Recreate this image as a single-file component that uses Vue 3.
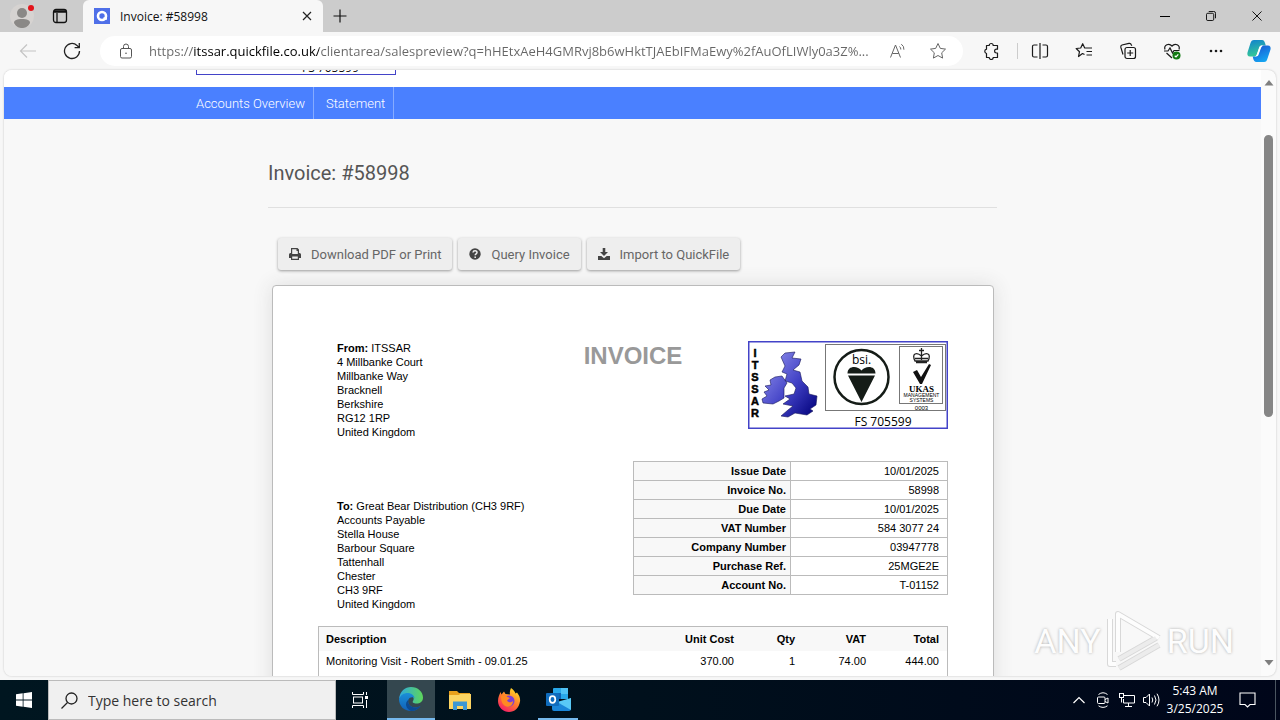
<template>
  <div class="desktop">
    <!-- Tab strip -->
    <header class="tab-strip">
      <button class="profile" aria-label="Profile">
        <svg width="28" height="28" viewBox="0 0 28 28">
          <circle cx="13" cy="14" r="12" fill="#d6d3d1" />
          <circle cx="13" cy="11" r="5" fill="#8a8886" />
          <path d="M5 21c0-3 3-4 8-4s8 1 8 4c-2 4-5 5-8 5s-6-1-8-5z" fill="#8a8886" />
          <circle cx="22" cy="6" r="3" fill="#e3141b" />
        </svg>
      </button>
      <button class="workspaces" aria-label="Tab actions">
        <svg width="16" height="16" viewBox="0 0 16 16" fill="none" stroke="#111" stroke-width="1.3">
          <rect x="1.5" y="1.5" width="13" height="13" rx="2.5" />
          <path d="M2 3h12M2 4.2h12M5 5v9.500" />
        </svg>
      </button>
      <div class="tab">
        <svg width="16" height="16" viewBox="0 0 16 16">
          <rect width="16" height="16" fill="#4f6fe8" />
          <circle cx="8" cy="8" r="4" fill="none" stroke="#fff" stroke-width="2.600" />
          <path d="M9.500 10.500h3.500" stroke="#fff" stroke-width="2.500" />
        </svg>
        <span class="tab-title">Invoice: #58998</span>
        <button class="tab-close" aria-label="Close tab">
          <svg width="10" height="10" viewBox="0 0 10 10" stroke="#222" stroke-width="1.200">
            <path d="M1 1l8 8M9 1L1 9" />
          </svg>
        </button>
      </div>
      <button class="new-tab" aria-label="New tab">
        <svg width="14" height="14" viewBox="0 0 14 14" stroke="#111" stroke-width="1.200">
          <path d="M7 .5v13M.5 7h13" />
        </svg>
      </button>
      <div class="window-buttons">
        <button aria-label="Minimize">
          <svg width="10" height="10" viewBox="0 0 10 10"><path d="M0 5.500h10" stroke="#000" /></svg>
        </button>
        <button aria-label="Restore">
          <svg width="10" height="10" viewBox="0 0 11 11" fill="none" stroke="#000">
            <rect x=".5" y="2.500" width="8" height="8" rx="1.500" />
            <path d="M3 .5h5.500a2 2 0 0 1 2 2V8" />
          </svg>
        </button>
        <button aria-label="Close">
          <svg width="10" height="10" viewBox="0 0 11 11" stroke="#000"><path d="M.5.5l10 10M10.500.5l-10 10" /></svg>
        </button>
      </div>
    </header>

    <!-- Address bar -->
    <div class="toolbar">
      <button class="tool" aria-label="Back">
        <svg width="18" height="16" viewBox="0 0 18 16" fill="none" stroke="#c4c4c4" stroke-width="1.200">
          <path d="M17 8H2M8 1.500L1.500 8 8 14.500" />
        </svg>
      </button>
      <button class="tool" aria-label="Refresh">
        <svg width="18" height="18" viewBox="0 0 18 18" fill="none" stroke="#222" stroke-width="1.300">
          <path d="M16.500 9A7.500 7.500 0 1 1 14 3.400L16 5.500M16.300 1v4.700h-4.700" />
        </svg>
      </button>
      <div class="omnibox">
        <svg width="14" height="16" viewBox="0 0 14 16" fill="none" stroke="#555">
          <rect x="1.500" y="5.500" width="11" height="9.500" rx="1.500" />
          <path d="M4.500 5.500V3.500a2.500 2.500 0 0 1 5 0v2" />
          <circle cx="7" cy="10.200" r=".8" fill="#555" stroke="none" />
        </svg>
        <input v-model="address" class="address" type="text" aria-label="Address" />
        <button class="omni-button" aria-label="Read aloud">
          <svg width="18" height="16" viewBox="0 0 18 16" fill="none" stroke="#666">
            <path d="M1.500 14.500L6.500 2l5 12.500M3.300 10.500h6.500M10.500 3.500q1.500 1.200 1.300 3M12.300 1.200q3 2 2.600 5.500" />
          </svg>
        </button>
        <button class="omni-button" aria-label="Add to favorites">
          <svg width="18" height="18" viewBox="0 0 18 18" fill="none" stroke="#666" stroke-linejoin="round">
            <path :d="starPath" />
          </svg>
        </button>
      </div>
      <button class="tool" aria-label="Extensions">
        <svg width="18" height="18" viewBox="0 0 18 18" fill="none" stroke="#1a1a1a" stroke-width="1.200" stroke-linejoin="round">
          <path d="M4.500 3.500h2.700a2 2 0 0 1 4 0H15.500V7.200h-1a1.900 1.900 0 0 0 0 3.800h1v4.500h-4.300a2 2 0 0 1-4 0H4.500v-4a2.200 2.200 0 0 1 0-4.300z" />
        </svg>
      </button>
      <span class="separator"></span>
      <button class="tool" aria-label="Split screen">
        <svg width="18" height="18" viewBox="0 0 18 18" fill="none" stroke="#1a1a1a" stroke-width="1.200">
          <path d="M6.500 3H3a1.500 1.500 0 0 0-1.500 1.500v9A1.500 1.500 0 0 0 3 15h3.500M11.500 3H15a1.500 1.500 0 0 1 1.500 1.500v9A1.500 1.500 0 0 1 15 15h-3.500M9 1v16" />
        </svg>
      </button>
      <button class="tool" aria-label="Favorites">
        <svg width="18" height="18" viewBox="0 0 18 18" fill="none" stroke="#1a1a1a" stroke-width="1.200" stroke-linejoin="round">
          <path d="M9.500 12.500L7.500 11.500 3.500 14.500 4.500 9.700 1.200 6.500 5.700 6 7.700 1.700 9.700 6H17M11.500 9.500H17M11.500 13H17" />
        </svg>
      </button>
      <button class="tool" aria-label="Collections">
        <svg width="18" height="18" viewBox="0 0 18 18" fill="none" stroke="#1a1a1a" stroke-width="1.200">
          <rect x="6" y="5.500" width="10.500" height="11" rx="2" />
          <path d="M11.200 8v6M8.200 11h6M4 12.500L1.800 5.200A2 2 0 0 1 3 3l7-1.600a2 2 0 0 1 2.300 1.300l.5 1" />
        </svg>
      </button>
      <button class="tool" aria-label="Browser essentials">
        <svg width="18" height="18" viewBox="0 0 18 18" fill="none" stroke="#1a1a1a" stroke-width="1.200">
          <path d="M2 7.500C.5 3 6 .5 9 4c3-3.500 8.500-1 7 3.500M1 9h4l2-3 2.500 5L11 8.500h5.500M3.500 11L9 16" />
          <circle cx="13.500" cy="13.500" r="4" fill="#137a13" stroke="none" />
          <path d="M11.700 13.700l1.300 1.200 2.300-2.600" stroke="#fff" />
        </svg>
      </button>
      <button class="tool" aria-label="Settings and more">
        <svg width="16" height="4" viewBox="0 0 16 4" fill="#1a1a1a">
          <circle cx="3" cy="2" r="1.300" /><circle cx="8" cy="2" r="1.300" /><circle cx="13" cy="2" r="1.300" />
        </svg>
      </button>
      <button class="tool copilot" aria-label="Copilot">
        <svg width="24" height="24" viewBox="0 0 24 24">
          <defs>
            <linearGradient id="copilotLeft" x1="0" y1="0" x2="0.300" y2="1">
              <stop offset="0" stop-color="#0f7fd0" /><stop offset="1" stop-color="#35c997" />
            </linearGradient>
            <linearGradient id="copilotRight" x1="0" y1="0" x2="0.500" y2="1">
              <stop offset="0" stop-color="#1b4fd0" /><stop offset="1" stop-color="#15a3f0" />
            </linearGradient>
          </defs>
          <path d="M7 1h8c2 0 2.500 1.500 3 3l.8 2.500H15c-2 0-2.700 1-3.200 3l-2 6C9.200 17 8.500 17.500 7 17.500H3C.5 17.500 0 15.500.5 13.500l3-9.500C4.200 2 5 1 7 1z" fill="url(#copilotLeft)" />
          <path d="M17 23H9.500c-2 0-2.700-1.500-3.200-3l-.6-2.500H8c2 0 3-1 3.500-3l2-5.500c.6-2 1.500-2.500 3-2.500h4.300c2.500 0 3.200 2 2.700 4l-3 9C19.800 22 19 23 17 23z" fill="url(#copilotRight)" />
          <path d="M14 6.500h2.500c-1.500.5-2.200 1.500-2.700 3l-2 5.500c-.6 1.800-1.400 2.500-3 2.500H7.500c1.500-.3 2-1 2.500-2.500l2-5.500c.4-1.500 1-2.500 2-3z" fill="#fff" />
        </svg>
      </button>
    </div>

    <!-- Page -->
    <div class="viewport">
      <main class="page">
        <div class="site-header">
          <div class="container">
            <div class="header-logo"><span>FS 705599</span></div>
          </div>
        </div>
        <nav class="site-nav">
          <div class="container nav-links">
            <a href="#">Accounts Overview</a>
            <a href="#">Statement</a>
          </div>
        </nav>

        <section class="content">
          <h1>Invoice: #58998</h1>
          <div class="actions">
            <button class="action">
              <svg width="12" height="12" viewBox="0 0 12 12" fill="#444">
                <path fill-rule="evenodd" d="M2 0h6.500L10 1.500V5h.5A1.500 1.500 0 0 1 12 6.500V10h-2v2H2v-2H0V6.500A1.500 1.500 0 0 1 1.500 5H2zM3.200 1.200V6h5.600V3H7.500V1.200zM3.200 8.500v2.300h5.600V8.500z" />
              </svg>
              Download PDF or Print
            </button>
            <button class="action">
              <svg width="12" height="12" viewBox="0 0 12 12">
                <circle cx="6" cy="6" r="5.700" fill="#444" />
                <path d="M4 4.500c.2-2.300 4-2.200 4 0C8 6 6.200 5.800 6.200 7.300M6.200 8.500v1.500" fill="none" stroke="#eee" stroke-width="1.500" />
              </svg>
              Query Invoice
            </button>
            <button class="action">
              <svg width="12" height="12" viewBox="0 0 12 12" fill="#444">
                <path d="M4.700 0h2.600v4H10L6 8 2 4h2.700zM0 8h3.300L6 10.300 8.700 8H12v4H0z" />
              </svg>
              Import to QuickFile
            </button>
          </div>

          <article class="sheet">
            <div class="sheet-top">
              <address class="from">
                <b>From:</b> ITSSAR<br />
                <template v-for="line in fromLines" :key="line">{{ line }}<br /></template>
              </address>
              <h2>INVOICE</h2>
              <svg class="logo" width="200" height="88" viewBox="0 0 200 88" role="img" aria-label="ITSSAR">
                <defs>
                  <linearGradient id="ukFill" gradientUnits="userSpaceOnUse" x1="20" y1="30" x2="66" y2="66">
                    <stop offset="0" stop-color="#7c7ce2" /><stop offset="0.500" stop-color="#4242c6" /><stop offset="1" stop-color="#0c0c88" />
                  </linearGradient>
                </defs>
                <rect x=".75" y=".75" width="198.500" height="86.500" fill="#fff" stroke="#4343c8" stroke-width="1.500" />
                <g class="logo-letters">
                  <text v-for="(letter, i) in 'ITSSAR'" :key="i" x="7" :y="16 + i * 12">{{ letter }}</text>
                </g>
                <g fill="url(#ukFill)" stroke="#16165a" stroke-width=".6" stroke-linejoin="round">
                  <path d="M33 16L37 12 47 11 44 17 53 18 51 24 45 29 52 31 54 40 60 46 61 53 69 55 68 64 62 68 65 70 59 74 47 72 40 76 33 75 40 69 45 65 35 63 42 58 37 55 46 53 48 47 44 42 37 40 39 33 34 31 37 25z" />
                  <path d="M17 45L23 44 22 39 27 36 34 35 39 42 36 47 36 57 31 60 25 63 15 62 14 58 19 55 16 51 21 49z" />
                </g>
                <rect x="77.500" y="3.500" width="120" height="66" fill="none" stroke="#777" />
                <circle cx="113.500" cy="36" r="27" fill="#fff" stroke="#151c17" stroke-width="2.500" />
                <text class="logo-bsi" x="113.500" y="23">bsi.</text>
                <path d="M99.500 32.500c0-8 10-8 14-3 4-5 14-5 14 3zM100 34.500h27L113.500 61z" fill="#151c17" />
                <rect x="151.500" y="5.500" width="43" height="57" fill="none" stroke="#777" />
                <path d="M167 20c-4-8 2-9 6.500-5 4.500-4 10.500-3 6.500 5zM173.500 7v12M171 9.500h5M167 17.500h13M168 21.500h11" fill="none" stroke="#222" stroke-width="1.300" />
                <path d="M165 31l4-2 4 7 8-13 2 1-9 19h-2z" fill="#111" />
                <text class="logo-ukas" x="173.500" y="51">UKAS</text>
                <text class="logo-small" x="173.500" y="56">MANAGEMENT</text>
                <text class="logo-small" x="173.500" y="61">SYSTEMS</text>
                <text class="logo-code" x="173.500" y="69">0003</text>
                <text class="logo-fs" x="135" y="85">FS 705599</text>
              </svg>

              <address class="to">
                <b>To:</b> Great Bear Distribution (CH3 9RF)<br />
                <template v-for="line in toLines" :key="line">{{ line }}<br /></template>
              </address>
              <table class="summary">
                <tbody>
                  <tr v-for="row in summary" :key="row.label">
                    <th scope="row">{{ row.label }}</th>
                    <td>{{ row.value }}</td>
                  </tr>
                </tbody>
              </table>
            </div>

            <table class="items">
              <thead>
                <tr>
                  <th class="item-description">Description</th>
                  <th class="item-cost">Unit Cost</th>
                  <th class="item-qty">Qty</th>
                  <th class="item-vat">VAT</th>
                  <th class="item-total">Total</th>
                </tr>
              </thead>
              <tbody>
                <tr v-for="item in items" :key="item.description">
                  <td class="item-description">{{ item.description }}</td>
                  <td>{{ formatPrice(item.cost) }}</td>
                  <td>{{ item.qty }}</td>
                  <td>{{ formatPrice(item.vat) }}</td>
                  <td>{{ formatPrice(item.cost * item.qty + item.vat) }}</td>
                </tr>
              </tbody>
            </table>
          </article>
        </section>
      </main>
      <div class="scrollbar">
        <svg width="10" height="6" viewBox="0 0 10 6" fill="#7f7f7f"><path d="M5 0l4.500 5.500H.5z" /></svg>
        <div class="track"><div class="thumb"></div></div>
        <svg width="10" height="6" viewBox="0 0 10 6" fill="#7f7f7f"><path d="M5 5.500L9.500 0H.5z" /></svg>
      </div>
    </div>

    <!-- Watermark -->
    <div class="watermark">
      <span>ANY</span>
      <svg width="58" height="62" viewBox="0 0 58 62" fill="none" stroke-linejoin="round">
        <g stroke="#d8d8d8" stroke-width="6">
          <path d="M13 42V4l41 24M5 9v45h6M14 58l40-23M14 49l37-21" />
        </g>
        <g stroke="#fdfdfd" stroke-width="4">
          <path d="M13 42V4l41 24M5 9v45h6" />
        </g>
        <g stroke="#ececec" stroke-width="4">
          <path d="M14 58l40-23M14 49l37-21" />
        </g>
      </svg>
      <span>RUN</span>
    </div>

    <!-- Taskbar -->
    <footer class="taskbar">
      <button class="start" aria-label="Start">
        <svg width="16" height="16" viewBox="0 0 16 16" fill="#fff">
          <path d="M0 2.200l6.700-.9v6.300H0zM7.500 1.200L16 0v7.600H7.500zM0 8.400h6.700v6.300L0 13.800zM7.500 8.400H16V16l-8.500-1.200z" />
        </svg>
      </button>
      <label class="search">
        <svg width="17" height="17" viewBox="0 0 17 17" fill="none" stroke="#222" stroke-width="1.300">
          <circle cx="10.500" cy="6.500" r="5.500" /><path d="M6.500 10.500L.5 16.500" />
        </svg>
        <input type="text" placeholder="Type here to search" aria-label="Search" />
      </label>
      <button class="task task-view" aria-label="Task View">
        <svg width="17" height="16" viewBox="0 0 17 16" fill="none" stroke="#fff">
          <path d="M.5 0v2.500h11V0M.5 16v-2.500h11V16M14.500 0v3M14.500 8v8" />
          <rect x="1.500" y="5" width="9" height="6" /><rect x="13.500" y="4.500" width="2" height="2" fill="#fff" />
        </svg>
      </button>
      <button class="task active" aria-label="Microsoft Edge">
        <svg width="24" height="24" viewBox="0 0 24 24">
          <defs>
            <linearGradient id="edgeTop"><stop offset="0" stop-color="#2da8e0" /><stop offset="1" stop-color="#5ed65a" /></linearGradient>
            <linearGradient id="edgeLow" x1="0" y1="0" x2="0" y2="1"><stop offset="0" stop-color="#1a8fd8" /><stop offset="1" stop-color="#1160b7" /></linearGradient>
          </defs>
          <path d="M0 12C1 4 6 0 12 0c7 0 12 5 12 10.500 0 4-3 6-6.500 6-3 0-4.500-1-3.500-2.500 2-3-.5-6-4.500-6C5 8 1 10 0 12z" fill="url(#edgeTop)" />
          <path d="M0 12c1.500-4 5-6 8.500-6 4 0 7 2.500 7 5.500-1-2-5-1.500-6 1-1.500 4 2 8 6.500 8 2.500 0 4-.7 5.500-1.500C19.500 22 16 24 12 24 5 24 0 19 0 12z" fill="url(#edgeLow)" />
          <path d="M9.500 12.500c-1.500 4 2 8 6.500 8 2.500 0 4-.7 5.500-1.500C19.500 22 16 24 12 24c-5-2-7-8-2.500-11.500z" fill="#0d4a91" />
        </svg>
      </button>
      <button class="task" aria-label="File Explorer">
        <svg width="22" height="19" viewBox="0 0 22 19">
          <path d="M0 0h8l2 2h11v4H0z" fill="#e9a01c" />
          <path d="M0 4h10l1-1h11v15H0z" fill="#fcd462" />
          <path d="M4 19v-8.500h14V19h-4v-4H8v4z" fill="#3b97d5" />
        </svg>
      </button>
      <button class="task" aria-label="Firefox">
        <svg width="24" height="24" viewBox="0 0 24 24">
          <defs>
            <linearGradient id="foxFill" x1="0.800" y1="0" x2="0.200" y2="1">
              <stop offset="0" stop-color="#ffe226" /><stop offset="0.500" stop-color="#ff7a2e" /><stop offset="1" stop-color="#f5156c" />
            </linearGradient>
          </defs>
          <path d="M14 0c3 2 4 4 4.500 5.500L20 4.500c2.500 3 3.500 6 3 9C22 20 17.500 24 12 24S1 19.500 1 13C1 9 2.500 6.500 3.500 4l1 2.500L7 3.500 8.500 6l4.500.5C12.500 4 13 2 14 0z" fill="url(#foxFill)" />
          <circle cx="12" cy="13" r="5.500" fill="#7b3fd6" />
          <path d="M4 8c3-1.500 5-.5 6.500 1L13 10l-3 2.500c1 2 4 2.500 6 .5 0 4-3 6.500-6.500 5.500C6 17.500 4 14 4 8z" fill="#ff8a22" />
        </svg>
      </button>
      <button class="task running" aria-label="Outlook">
        <svg width="25" height="23" viewBox="0 0 25 23">
          <path d="M7 1q0-1 1-1h13q1 0 1 1v10H7z" fill="#28a8ea" /><path d="M7 5h8v6H7z" fill="#0f64b5" /><path d="M15 0h7v6h-7z" fill="#50c2f5" />
          <path d="M6 11l9.500 5L25 10v11q0 2-2 2H8q-2 0-2-2z" fill="#1a86d9" /><path d="M25 10v12L11 14z" fill="#59c9f6" />
          <rect y="5" width="13" height="13" rx="1" fill="#0f6cbd" />
          <ellipse cx="6.500" cy="11.500" rx="2.800" ry="3.300" fill="none" stroke="#fff" stroke-width="1.700" />
        </svg>
      </button>
      <div class="tray">
        <button aria-label="Show hidden icons">
          <svg width="12" height="8" viewBox="0 0 12 8" fill="none" stroke="#fff" stroke-width="1.200"><path d="M.5 7L6 1.500 11.500 7" /></svg>
        </button>
        <button aria-label="Meet Now">
          <svg width="14" height="16" viewBox="0 0 14 16" fill="none" stroke="#fff">
            <rect x="1.500" y="5" width="7.500" height="6.500" rx="1" />
            <path d="M9 7.500l3-1.500v5L9 9.500M2.500 2.500Q7-1 11.500 2.500M2.500 13.800Q7 17 11.500 13.800" />
          </svg>
        </button>
        <button aria-label="Network">
          <svg width="16" height="14" viewBox="0 0 16 14" fill="none" stroke="#fff">
            <path d="M5 2.500h10.500v7.500H4.500V6M9.500 10v3M6 13.500h7M2.500 5v4.500" /><rect x=".5" y=".5" width="4" height="4" />
          </svg>
        </button>
        <button aria-label="Volume">
          <svg width="17" height="14" viewBox="0 0 17 14" fill="none" stroke="#fff">
            <path d="M.5 4.500h2.500L6.500 1v12L3 9.500H.5zM9 4.500q1.500 2.500 0 5M11.500 2.500q3 4.500 0 9M14 .7q4 6.300 0 12.600" />
          </svg>
        </button>
        <div class="clock">
          <div>5:43 AM</div>
          <div>3/25/2025</div>
        </div>
        <button class="notifications" aria-label="Notifications">
          <svg width="17" height="16" viewBox="0 0 17 16" fill="none" stroke="#fff" stroke-width="1.100"><path d="M1 1h15v11.500h-5L8.500 15 6 12.500H1z" /></svg>
        </button>
        <span class="peek"></span>
      </div>
    </footer>
  </div>
</template>

<script setup>
import { ref } from 'vue'

const address = ref(
  'https://itssar.quickfile.co.uk/clientarea/salespreview?q=hHEtxAeH4GMRvj8b6wHktTJAEbIFMaEwy%2fAuOfLIWly0a3Z%...',
)

const starPath = 'M9 1.500l2.300 4.900 5.200.7-3.800 3.700.9 5.300L9 13.500l-4.600 2.600.9-5.300L1.500 7.100l5.200-.7z'

const fromLines = ['4 Millbanke Court', 'Millbanke Way', 'Bracknell', 'Berkshire', 'RG12 1RP', 'United Kingdom']

const toLines = [
  'Accounts Payable',
  'Stella House',
  'Barbour Square',
  'Tattenhall',
  'Chester',
  'CH3 9RF',
  'United Kingdom',
]

const summary = [
  { label: 'Issue Date', value: '10/01/2025' },
  { label: 'Invoice No.', value: '58998' },
  { label: 'Due Date', value: '10/01/2025' },
  { label: 'VAT Number', value: '584 3077 24' },
  { label: 'Company Number', value: '03947778' },
  { label: 'Purchase Ref.', value: '25MGE2E' },
  { label: 'Account No.', value: 'T-01152' },
]

const items = [{ description: 'Monitoring Visit - Robert Smith - 09.01.25', cost: 370, qty: 1, vat: 74 }]

// Function to format price with two decimals
const formatPrice = (price) => price.toFixed(2)
</script>

<style>
body {
  margin: 0;
}
</style>

<style scoped>
.desktop {
  display: flex;
  flex-direction: column;
  position: relative;
  height: 100vh;
  overflow: hidden;
  background: #f7f7f7;
  font-family: 'Open Sans', 'Noto Sans', sans-serif;
  font-size: 12px;
  color: #111;
}

button {
  display: flex;
  align-items: center;
  justify-content: center;
  padding: 0;
  border: 0;
  background: none;
  font: inherit;
  color: inherit;
}

svg {
  flex: none;
}

/* Tab strip */
.tab-strip {
  display: flex;
  flex: none;
  height: 32px;
  background: #ccc;
}

.profile {
  width: 46px;
}

.workspaces {
  width: 28px;
}

.tab {
  display: flex;
  align-items: center;
  gap: 10px;
  box-sizing: border-box;
  width: 240px;
  margin-left: 9px;
  padding: 0 8px 0 11px;
  border-radius: 6px 6px 0 0;
  background: #f7f7f7;
}

.tab-title {
  flex: 1;
}

.tab-close {
  width: 16px;
  height: 16px;
}

.new-tab {
  width: 34px;
}

.window-buttons {
  display: flex;
  margin-left: auto;
}

.window-buttons button {
  width: 46px;
}

/* Address bar */
.toolbar {
  display: flex;
  flex: none;
  align-items: center;
  height: 38px;
  padding-left: 6px;
}

.tool {
  width: 44px;
  height: 30px;
}

.copilot {
  width: 42px;
}

.omnibox {
  display: flex;
  flex: 1;
  align-items: center;
  min-width: 0;
  height: 30px;
  margin: 0 6px;
  padding-left: 19px;
  border-radius: 15px;
  background: #fff;
}

/* The host name is darker than the rest of the address */
.address {
  flex: 1;
  min-width: 0;
  margin-left: 16px;
  padding: 0;
  border: 0;
  outline: 0;
  background: linear-gradient(90deg, #666 44px, #000 44px, #000 170px, #666 170px);
  background-clip: text;
  -webkit-text-fill-color: transparent;
  font: 13px 'Open Sans', 'Noto Sans', sans-serif;
}

.omni-button {
  width: 40px;
}

.omni-button:last-child {
  margin-right: 5px;
}

.separator {
  width: 1px;
  height: 16px;
  margin-left: 4px;
  background: #ccc;
}

/* Viewport */
.viewport {
  display: flex;
  flex: 1;
  min-height: 0;
  margin: 0 4px 4px;
  border-radius: 8px;
  overflow: hidden;
  background: #fbfbfb;
  box-shadow: 0 0 2px #bbb;
}

.page {
  flex: 1;
  min-width: 0;
  overflow: hidden;
  background: #f8f8f8;
  font-family: Roboto, sans-serif;
}

.scrollbar {
  display: flex;
  flex-direction: column;
  align-items: center;
  justify-content: space-between;
  box-sizing: border-box;
  width: 15px;
  padding: 10px 0;
}

.track {
  flex: 1;
  padding-top: 49px;
}

.thumb {
  width: 9px;
  height: 282px;
  border-radius: 5px;
  background: #868686;
}

.container {
  max-width: 873px;
  margin: 0 auto;
}

.site-header {
  background: #fff;
}

.site-header .container {
  display: flex;
  align-items: flex-end;
  height: 17px;
}

.header-logo {
  display: flex;
  align-items: flex-end;
  justify-content: flex-end;
  box-sizing: border-box;
  width: 200px;
  height: 5px;
  margin-bottom: 12px;
  padding-right: 36px;
  border: 1px solid #4343c8;
  border-top: 0;
  overflow: hidden;
  font: 12px/13px 'Open Sans', sans-serif;
}

.site-nav {
  background: #4a80ff;
}

.nav-links {
  display: flex;
  height: 32px;
}

.nav-links a {
  padding: 0 8px 0 12px;
  border-right: 1px solid #86abff;
  color: #fff;
  font-size: 13px;
  font-weight: 300;
  line-height: 33px;
  text-decoration: none;
}

.nav-links a:first-child {
  padding-left: 0;
}

/* Invoice */
.content {
  max-width: 729px;
  margin: 0 auto;
}

h1 {
  margin: 0 0 30px;
  padding: 42px 0 22px;
  border-bottom: 1px solid #e0e0e0;
  color: #555;
  font-size: 20px;
  font-weight: 400;
  line-height: 24px;
}

.actions {
  display: flex;
  gap: 6px;
  margin: 0 10px 15px;
}

.action {
  gap: 10px;
  height: 32px;
  padding: 0 11px;
  border-radius: 3px;
  background: #eee;
  box-shadow: 0 1px 3px #999;
  color: #666;
  font-size: 13px;
}

.sheet {
  margin: 0 3px 0 4px;
  padding: 55px 45px;
  border: 1px solid #bbb;
  border-radius: 4px;
  background: #fff;
  box-shadow: 0 0 20px #ddd;
  color: #000;
  font-family: 'Liberation Sans', Arial, sans-serif;
  font-size: 11px;
  line-height: 14px;
}

.sheet-top {
  display: grid;
  grid-template-columns: 1fr auto 1fr;
  row-gap: 22px;
  margin-bottom: 15px;
}

address {
  padding-left: 19px;
  font-style: normal;
}

.to {
  margin-top: 38px;
}

h2 {
  margin: 0;
  color: #999;
  font-size: 24px;
  line-height: 30px;
}

.logo {
  justify-self: end;
  overflow: visible;
}

.logo-letters {
  font: bold 11px 'Liberation Sans', sans-serif;
  stroke: #000;
  stroke-width: 0.5;
  text-anchor: middle;
}

.logo-bsi,
.logo-ukas,
.logo-small,
.logo-code,
.logo-fs {
  text-anchor: middle;
}

.logo-bsi {
  font: 12px 'Open Sans', sans-serif;
}

.logo-ukas {
  font: bold 9px 'Liberation Serif', serif;
}

.logo-small {
  font: 5px 'Liberation Sans', sans-serif;
}

.logo-code {
  font: 6px 'Liberation Sans', sans-serif;
}

.logo-fs {
  font: 12px 'Open Sans', sans-serif;
}

table {
  border-collapse: collapse;
}

.summary {
  grid-column: 2 / 4;
  justify-self: end;
  align-self: start;
  width: 315px;
}

.summary th,
.summary td {
  width: 50%;
  height: 19px;
  padding: 0 8px 0 0;
  border: 1px solid #bbb;
  box-sizing: border-box;
  text-align: right;
}

.summary th {
  padding-right: 4px;
  background: #f8f8f8;
}

.items {
  width: 100%;
  border: 1px solid #bbb;
}

.items th,
.items td {
  padding: 3px 0 12px;
  text-align: right;
  vertical-align: top;
}

.items th {
  padding: 5px 0;
  background: #f8f8f8;
}

.items .item-description {
  padding-left: 7px;
  text-align: left;
}

.item-qty {
  width: 61px;
}

.item-vat {
  width: 71px;
}

.item-total {
  width: 73px;
}

.items th:last-child,
.items td:last-child {
  padding-right: 8px;
}

/* Watermark */
.watermark {
  display: flex;
  position: absolute;
  right: 46px;
  bottom: 48px;
  align-items: center;
  gap: 4px;
  color: #fdfdfd;
  font: 34px/40px Roboto, sans-serif;
  text-shadow: 0 0 3px #aaa;
  pointer-events: none;
}

/* Taskbar */
.taskbar {
  display: flex;
  flex: none;
  height: 40px;
  background: linear-gradient(90deg, #001620, #00101c 50%, #00061a);
  color: #fff;
}

.start {
  width: 48px;
}

.search {
  display: flex;
  align-items: center;
  gap: 10px;
  box-sizing: border-box;
  width: 288px;
  padding-left: 12px;
  border: 1px solid #bbb;
  background: #f0f0f0;
}

.search input {
  flex: 1;
  min-width: 0;
  padding: 0;
  border: 0;
  outline: 0;
  background: none;
  font: 14px 'Open Sans', 'Noto Sans', sans-serif;
}

.search input::placeholder {
  color: #333;
}

.task {
  box-sizing: border-box;
  width: 48px;
  margin-left: 1px;
}

.task-view {
  margin: 0 2px 0 0;
}

.active {
  border-bottom: 2px solid #76b9ed;
  background: #34474f;
}

.running {
  width: 40px;
  margin-left: 5px;
  border-bottom: 2px solid #76b9ed;
}

.tray {
  display: flex;
  align-items: center;
  margin-left: auto;
}

.tray button {
  width: 24px;
}

.clock {
  width: 64px;
  font-size: 12px;
  line-height: 18px;
  text-align: center;
}

.tray .notifications {
  width: 40px;
}

.peek {
  align-self: stretch;
  width: 1px;
  margin: 0 4px 0 8px;
  background: #4a5560;
}
</style>
